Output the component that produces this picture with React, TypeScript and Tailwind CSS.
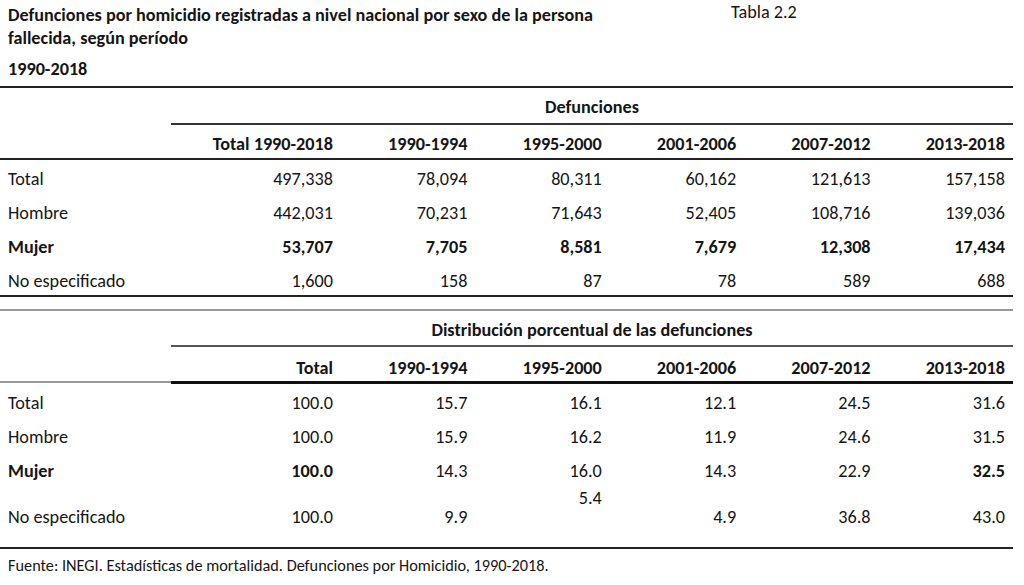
import React from "react";

type Cell = { v: string; b?: boolean };

const cols1 = ["Total 1990-2018", "1990-1994", "1995-2000", "2001-2006", "2007-2012", "2013-2018"];
const cols2 = ["Total", "1990-1994", "1995-2000", "2001-2006", "2007-2012", "2013-2018"];

const rows1: { label: string; b?: boolean; vals: string[] }[] = [
  { label: "Total", vals: ["497,338", "78,094", "80,311", "60,162", "121,613", "157,158"] },
  { label: "Hombre", vals: ["442,031", "70,231", "71,643", "52,405", "108,716", "139,036"] },
  { label: "Mujer", b: true, vals: ["53,707", "7,705", "8,581", "7,679", "12,308", "17,434"] },
  { label: "No especificado", vals: ["1,600", "158", "87", "78", "589", "688"] },
];

const rows2: { label: string; b?: boolean; vals: Cell[] }[] = [
  { label: "Total", vals: [{ v: "100.0" }, { v: "15.7" }, { v: "16.1" }, { v: "12.1" }, { v: "24.5" }, { v: "31.6" }] },
  { label: "Hombre", vals: [{ v: "100.0" }, { v: "15.9" }, { v: "16.2" }, { v: "11.9" }, { v: "24.6" }, { v: "31.5" }] },
  {
    label: "Mujer",
    b: true,
    vals: [{ v: "100.0", b: true }, { v: "14.3" }, { v: "16.0" }, { v: "14.3" }, { v: "22.9" }, { v: "32.5", b: true }],
  },
];

const grid = "grid grid-cols-[171px_170px_repeat(5,1fr)]";

export default function App() {
  return (
    <div className="w-[1024px] h-[585px] bg-white text-[#151515] font-['Carlito','Lato',sans-serif] text-[18.2px] overflow-hidden">
      <div className="flex pl-2 pt-[4px]">
        <div className="w-[723px] font-bold leading-[23px]">
          Defunciones por homicidio registradas a nivel nacional por sexo de la persona
          <br />
          fallecida, según período
        </div>
        <div className="leading-[23px] -mt-[3px]">Tabla 2.2</div>
      </div>
      <div className="pl-2 mt-[8px] font-bold leading-[23px]">1990-2018</div>

      {/* Table 1 */}
      <div className="w-[1013px] mt-[5px] border-t-2 border-[#222]">
        <div className="flex">
          <div className="w-[171px]" />
          <div className="flex-1">
            <div className="h-[35px] pt-[4px] flex items-center justify-center font-bold">Defunciones</div>
            <div className="h-[2px] bg-[#333]" />
          </div>
        </div>
        <div className={`${grid} h-[35px] pt-[6px] items-center font-bold border-b-2 border-[#222]`}>
          <div />
          {cols1.map((c) => (
            <div key={c} className="text-right pr-2">
              {c}
            </div>
          ))}
        </div>
        {rows1.map((r, i) => (
          <div
            key={r.label}
            className={`${grid} ${i === 3 ? "h-[33px]" : "h-[34px]"} pt-[6px] items-center ${r.b ? "font-bold" : ""}`}
          >
            <div className="pl-2">{r.label}</div>
            {r.vals.map((v, j) => (
              <div key={j} className="text-right pr-2">
                {v}
              </div>
            ))}
          </div>
        ))}
        <div className="h-[2px] bg-[#222]" />
      </div>

      {/* Table 2 */}
      <div className="w-[1013px] mt-[12px] border-t-2 border-[#9a9a9a]">
        <div className="flex">
          <div className="w-[171px]" />
          <div className="flex-1">
            <div className="h-[34px] pt-[6px] flex items-center justify-center font-bold">
              Distribución porcentual de las defunciones
            </div>
            <div className="h-[2px] bg-[#555]" />
          </div>
        </div>
        <div className={`${grid} h-[34px] pt-[8px] items-center font-bold`}>
          <div />
          {cols2.map((c) => (
            <div key={c} className="text-right pr-2">
              {c}
            </div>
          ))}
        </div>
        <div className="flex">
          <div className="w-[171px] h-[2px] bg-[#9a9a9a]" />
          <div className="flex-1 h-[3px] bg-[#111]" />
        </div>
        {rows2.map((r) => (
          <div key={r.label} className={`${grid} h-[34px] pt-[6px] items-center`}>
            <div className={`pl-2 ${r.b ? "font-bold" : ""}`}>{r.label}</div>
            {r.vals.map((c, j) => (
              <div key={j} className={`text-right pr-2 ${c.b ? "font-bold" : ""}`}>
                {c.v}
              </div>
            ))}
          </div>
        ))}
        <div className={`${grid} h-[61px] leading-[22px]`}>
          <div className="pl-2 pt-[20px]">No especificado</div>
          <div className="text-right pr-2 pt-[20px]">100.0</div>
          <div className="text-right pr-2 pt-[20px]">9.9</div>
          <div className="text-right pr-2 pt-[1px]">5.4</div>
          <div className="text-right pr-2 pt-[20px]">4.9</div>
          <div className="text-right pr-2 pt-[20px]">36.8</div>
          <div className="text-right pr-2 pt-[20px]">43.0</div>
        </div>
        <div className="h-[2px] bg-[#222]" />
      </div>
      <div className="pl-2 mt-[5px] leading-[22px] text-[16.3px]">
        Fuente: INEGI. Estadísticas de mortalidad. Defunciones por Homicidio, 1990-2018.
      </div>
    </div>
  );
}
